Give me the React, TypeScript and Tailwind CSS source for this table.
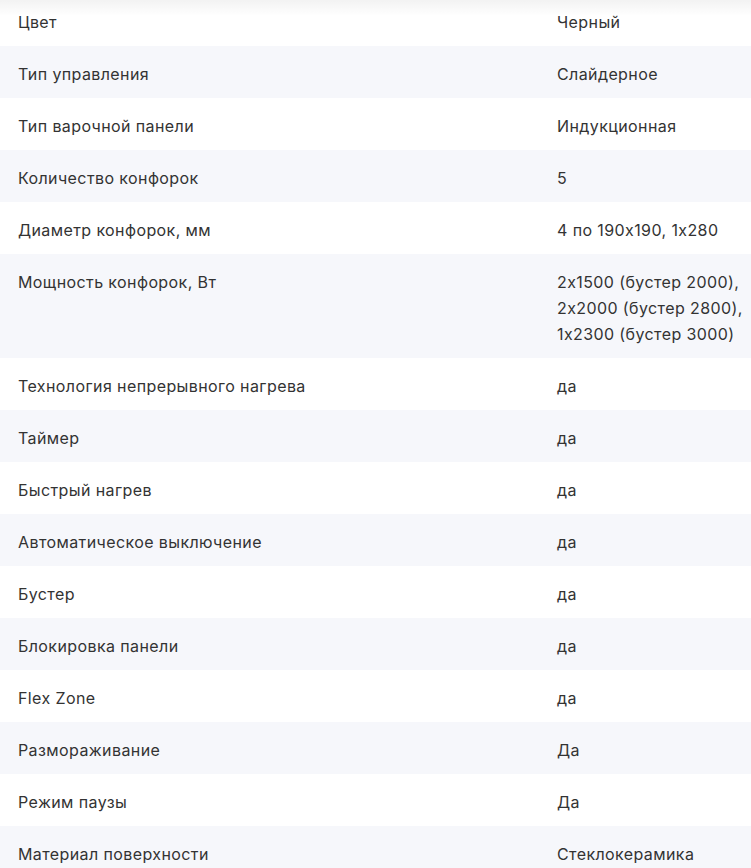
const specs: { label: string; value: string[] }[] = [
  { label: "Цвет", value: ["Черный"] },
  { label: "Тип управления", value: ["Слайдерное"] },
  { label: "Тип варочной панели", value: ["Индукционная"] },
  { label: "Количество конфорок", value: ["5"] },
  { label: "Диаметр конфорок, мм", value: ["4 по 190x190, 1x280"] },
  {
    label: "Мощность конфорок, Вт",
    value: ["2x1500 (бустер 2000),", "2x2000 (бустер 2800),", "1x2300 (бустер 3000)"],
  },
  { label: "Технология непрерывного нагрева", value: ["да"] },
  { label: "Таймер", value: ["да"] },
  { label: "Быстрый нагрев", value: ["да"] },
  { label: "Автоматическое выключение", value: ["да"] },
  { label: "Бустер", value: ["да"] },
  { label: "Блокировка панели", value: ["да"] },
  { label: "Flex Zone", value: ["да"] },
  { label: "Размораживание", value: ["Да"] },
  { label: "Режим паузы", value: ["Да"] },
  { label: "Материал поверхности", value: ["Стеклокерамика"] },
]

export default function App() {
  return (
    <div className="relative h-[868px] w-[751px] overflow-hidden bg-white font-['Inter',sans-serif] text-[16px] leading-[26px] tracking-[0.4px] text-[#333] [font-feature-settings:'calt'_0]">
      {/* Spec table */}
      <div className="-mt-[6px] flex flex-col">
        {specs.map((row, i) => (
          <div
            key={row.label}
            className={`grid grid-cols-[557px_1fr] pt-[15px] pb-[11px] ${i % 2 === 1 ? "bg-[#f6f7fb]" : "bg-white"}`}
          >
            <div className="pl-[18px] pr-4">{row.label}</div>
            <div className="flex flex-col">
              {row.value.map((line) => (
                <span key={line} className="whitespace-nowrap">
                  {line}
                </span>
              ))}
            </div>
          </div>
        ))}
      </div>

      {/* Top fade from header shadow */}
      <div className="pointer-events-none absolute inset-x-0 top-0 h-4 bg-gradient-to-b from-black/[0.05] to-transparent" />
    </div>
  )
}
